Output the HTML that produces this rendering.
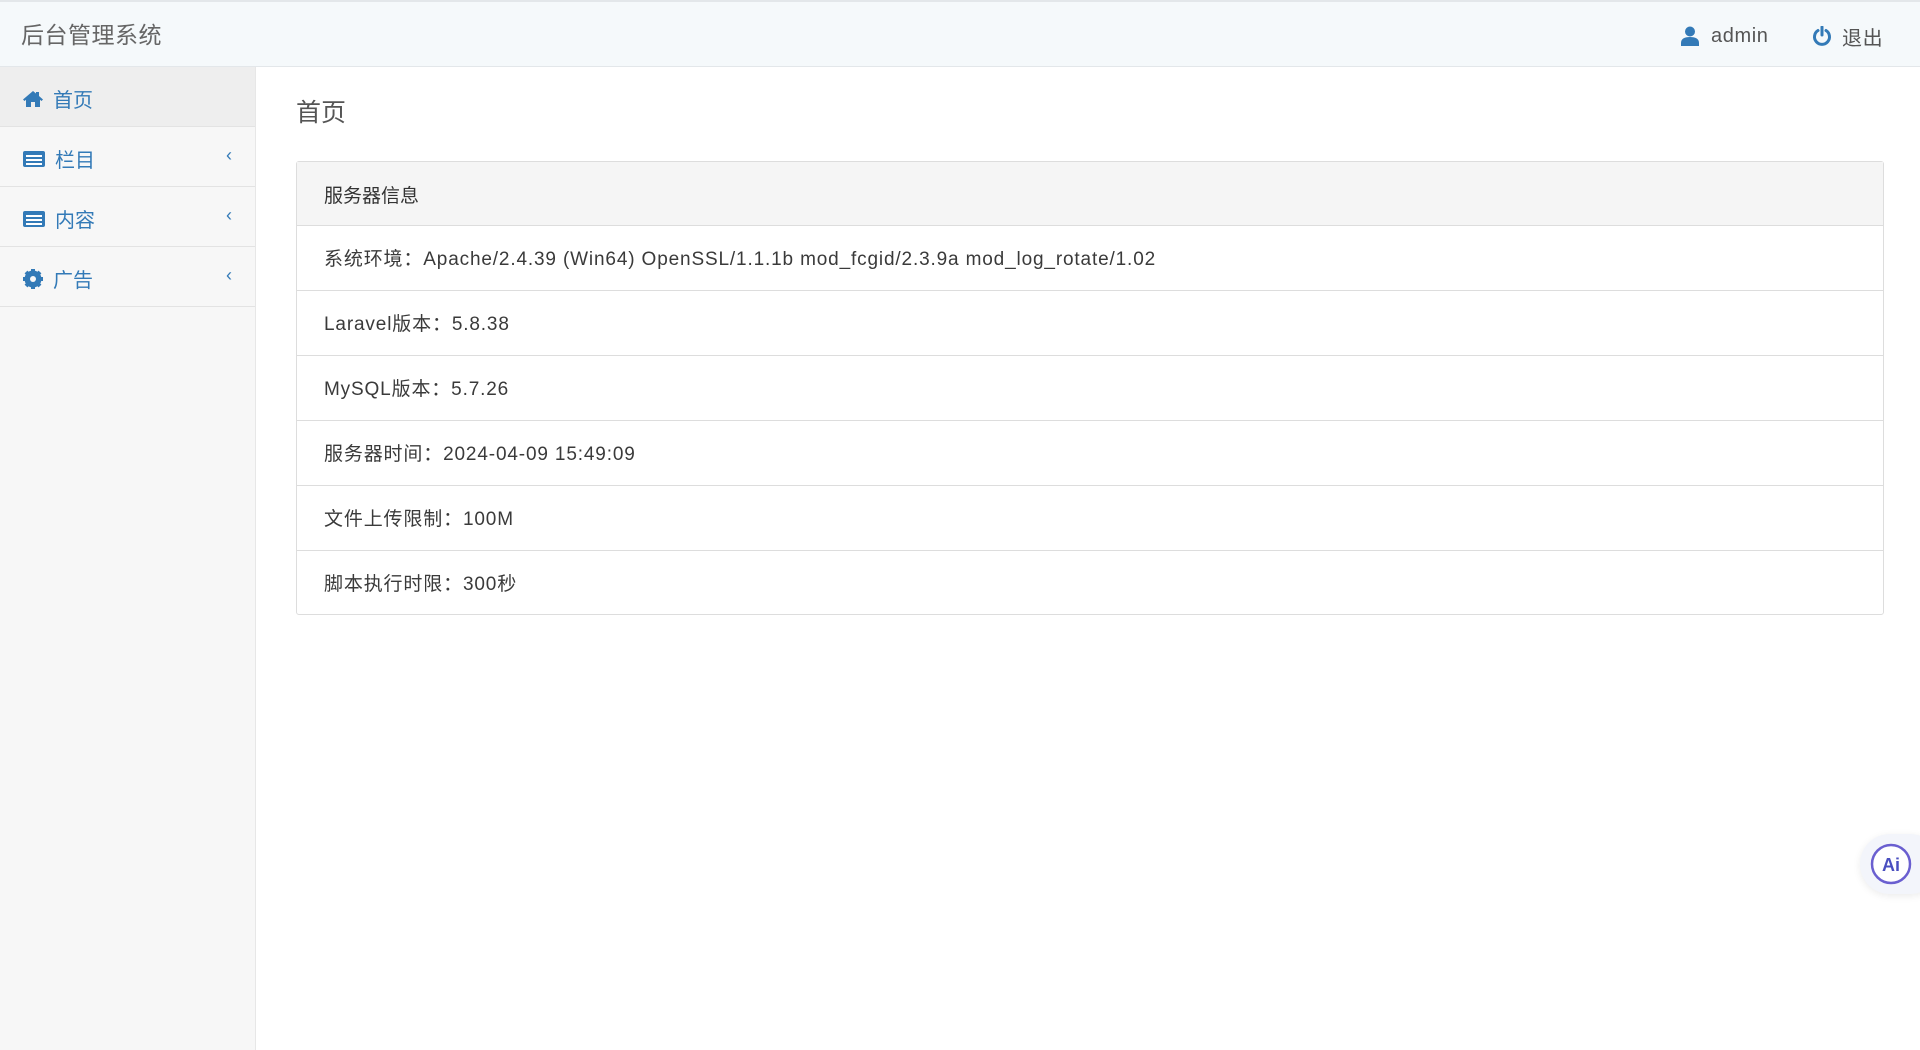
<!DOCTYPE html>
<html><head><meta charset="utf-8"><style>
*{margin:0;padding:0;box-sizing:border-box}
body{width:1920px;height:1050px;overflow:hidden;background:#fff;font-family:"Liberation Sans","Noto Sans CJK SC",sans-serif;color:#333;position:relative}
.hd{position:absolute;left:0;top:0;width:1920px;height:67px;background:#f5f9fb;border-top:2px solid #e3e7ea;border-bottom:1px solid #e3e7ea}
.brand{position:absolute;left:21px;top:14px;font-size:23px;color:#666;letter-spacing:.5px}
.hr{position:absolute;top:20px;font-size:20px;color:#555;display:flex;align-items:center;height:28px;letter-spacing:.6px}
.sb{position:absolute;left:0;top:67px;width:256px;height:983px;background:#f7f7f7;border-right:1px solid #e7e7e7}
.it{height:60px;border-bottom:1px solid #e3e3e3;position:relative;display:flex;align-items:center;padding-left:23px;padding-top:4px;font-size:20px;color:#337ab7}
.it.a{background:#eee}
.it svg{margin-right:10px}
.ch{position:absolute;left:226px;top:18px;font-size:18px;color:#337ab7}
.h1{position:absolute;left:296px;top:93px;font-size:25px;color:#555}
.pn{position:absolute;left:296px;top:161px;width:1588px;border:1px solid #ddd;border-radius:3px}
.ph{height:64px;background:#f5f5f5;border-bottom:1px solid #ddd;padding-left:27px;line-height:70px;font-size:19px;color:#333}
.r{height:65px;border-bottom:1px solid #ddd;padding-left:27px;line-height:67px;font-size:19px;color:#3a3a3a;letter-spacing:.85px}
.r:last-child{border-bottom:none;height:63px}
.ai{position:absolute;left:1860px;top:834px;width:80px;height:60px;border-radius:30px;background:#f3f5fb;box-shadow:0 2px 8px rgba(0,0,0,.08)}
</style></head><body>
<div class="hd"><div class="brand">后台管理系统</div>
<div class="hr" style="left:1681px"><svg width="18" height="20" viewBox="0 0 18 20" style="margin-right:12px"><circle cx="9" cy="5.5" r="5" fill="#337ab7"/><path d="M0 20v-3c0-4 3-6 9-6s9 2 9 6v3z" fill="#337ab7"/></svg>admin</div>
<div class="hr" style="left:1812px"><svg width="20" height="20" viewBox="0 0 20 20" style="margin-right:10px"><path d="M6 4.5A7.5 7.5 0 1 0 14 4.5" fill="none" stroke="#337ab7" stroke-width="3" stroke-linecap="round"/><path d="M10 1v8" stroke="#337ab7" stroke-width="3" stroke-linecap="round"/></svg>退出</div>
</div>
<div class="sb">
<div class="it a"><svg width="20" height="18" viewBox="0 0 20 18"><path d="M10 1L0 9.5l1.5 1.5L3 9.8V17h5v-5h4v5h5V9.8l1.5 1.2L20 9.5 16 6V2h-3v1.5z" fill="#337ab7"/></svg>首页</div>
<div class="it"><svg width="22" height="18" viewBox="0 0 22 18"><rect x="0" y="1" width="22" height="16" rx="2" fill="#337ab7"/><rect x="3" y="5" width="16" height="2" fill="#fff"/><rect x="3" y="9" width="16" height="2" fill="#fff"/><rect x="3" y="13" width="16" height="2" fill="#fff"/></svg>栏目<span class="ch">‹</span></div>
<div class="it"><svg width="22" height="18" viewBox="0 0 22 18"><rect x="0" y="1" width="22" height="16" rx="2" fill="#337ab7"/><rect x="3" y="5" width="16" height="2" fill="#fff"/><rect x="3" y="9" width="16" height="2" fill="#fff"/><rect x="3" y="13" width="16" height="2" fill="#fff"/></svg>内容<span class="ch">‹</span></div>
<div class="it"><svg width="20" height="20" viewBox="0 0 20 20"><circle cx="10" cy="10" r="6.5" fill="none" stroke="#337ab7" stroke-width="4"/><g stroke="#337ab7" stroke-width="4"><path d="M10 0v20M0 10h20M3 3l14 14M17 3L3 17"/></g><circle cx="10" cy="10" r="3" fill="#f7f7f7"/></svg>广告<span class="ch">‹</span></div>
</div>
<div class="h1">首页</div>
<div class="pn">
<div class="ph">服务器信息</div>
<div class="r">系统环境：Apache/2.4.39 (Win64) OpenSSL/1.1.1b mod_fcgid/2.3.9a mod_log_rotate/1.02</div>
<div class="r">Laravel版本：5.8.38</div>
<div class="r">MySQL版本：5.7.26</div>
<div class="r">服务器时间：2024-04-09 15:49:09</div>
<div class="r">文件上传限制：100M</div>
<div class="r">脚本执行时限：300秒</div>
</div>
<div class="ai"><svg width="44" height="44" viewBox="0 0 44 44" style="position:absolute;left:9px;top:8px"><circle cx="22" cy="22" r="19" fill="#fff" stroke="#6a5fd0" stroke-width="2.5"/><text x="22" y="29" text-anchor="middle" font-family="Liberation Sans" font-weight="bold" font-size="18" fill="#4a4fc0">Ai</text></svg></div>
</body></html>
